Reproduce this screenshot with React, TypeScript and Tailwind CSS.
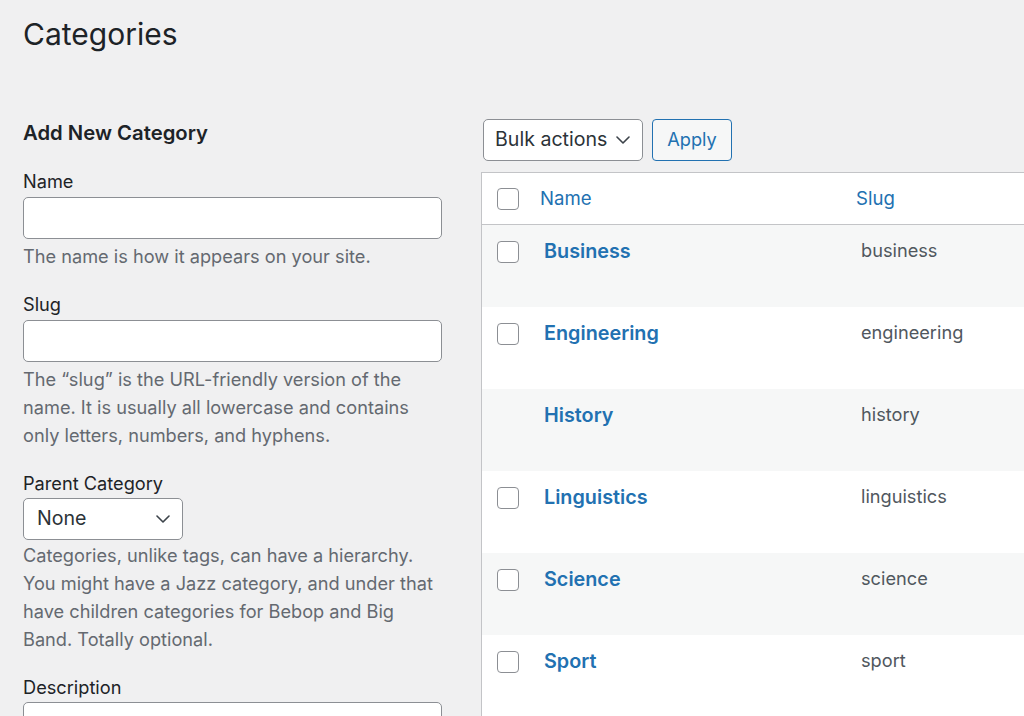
const categories = [
  {name: "Business", slug: "business", checkbox: true},
  {name: "Engineering", slug: "engineering", checkbox: true},
  {name: "History", slug: "history", checkbox: false},
  {name: "Linguistics", slug: "linguistics", checkbox: true},
  {name: "Science", slug: "science", checkbox: true},
  {name: "Sport", slug: "sport", checkbox: true},
]

function Chevron() {
  return (
    <svg width="14" height="8" viewBox="0 0 14 8" fill="none" className="shrink-0">
      <path d="M1 1l6 6 6-6" stroke="#3c434a" strokeWidth="1.6" strokeLinecap="round" strokeLinejoin="round" />
    </svg>
  )
}

function Checkbox() {
  return (
    <span className="block w-[22px] h-[22px] rounded-[4px] border border-[#8c8f94] bg-white shrink-0" />
  )
}

function Field({
  label,
  children,
  help,
  helpGap = "mt-[3px]",
}: {
  label: string
  children: React.ReactNode
  help?: string[]
  helpGap?: string
}) {
  return (
    <div className="mb-[22px]">
      <div className="text-[18.2px] leading-[24px] text-[#1d2327] mb-[4px]">{label}</div>
      {children}
      {help && (
        <p className={`${helpGap} text-[18.2px] leading-[28px] text-[#646970] whitespace-nowrap`}>
          {help.map((line, i) => (
            <span key={i} className="block">
              {line}
            </span>
          ))}
        </p>
      )}
    </div>
  )
}

export default function App() {
  return (
    <div
      className="w-[1024px] h-[716px] overflow-hidden bg-[#f0f0f1] text-[#1d2327]"
      style={{fontFamily: "Inter, 'Liberation Sans', sans-serif"}}
    >
      <div className="pl-[23px] pt-[16px]">
        <h1 className="text-[30px] leading-[37px] font-normal text-[#1d2327]">Categories</h1>
      </div>

      <div className="flex gap-[39px] pl-[23px] mt-[68px]">
        {/* add form */}
        <div className="w-[419px] shrink-0">
          <h2 className="text-[20.3px] leading-[24px] font-semibold mb-[24px]">Add New Category</h2>

          <Field label="Name" help={["The name is how it appears on your site."]}>
            <div className="h-[42px] rounded-[5px] border border-[#8c8f94] bg-white" />
          </Field>

          <Field
            label="Slug"
            help={[
              "The \u201cslug\u201d is the URL-friendly version of the",
              "name. It is usually all lowercase and contains",
              "only letters, numbers, and hyphens.",
            ]}
          >
            <div className="h-[42px] rounded-[5px] border border-[#8c8f94] bg-white" />
          </Field>

          <Field
            label="Parent Category"
            helpGap="mt-[1px]"
            help={[
              "Categories, unlike tags, can have a hierarchy.",
              "You might have a Jazz category, and under that",
              "have children categories for Bebop and Big",
              "Band. Totally optional.",
            ]}
          >
            <div className="w-[160px] h-[42px] -mt-[1px] rounded-[5px] border border-[#8c8f94] bg-white flex items-center justify-between pl-[13px] pr-[12px]">
              <span className="text-[19.6px] text-[#2c3338]">None</span>
              <Chevron />
            </div>
          </Field>

          <Field label="Description">
            <div className="h-[80px] -mt-[1px] rounded-[5px] border border-[#8c8f94] bg-white" />
          </Field>
        </div>

        {/* list table */}
        <div className="w-[620px] shrink-0 -mt-[2px]">
          <div className="flex gap-[9px] ml-[2px]">
            <div className="w-[160px] h-[42px] rounded-[5px] border border-[#8c8f94] bg-white flex items-center justify-between pl-[11px] pr-[12px]">
              <span className="text-[19.6px] text-[#2c3338]">Bulk actions</span>
              <Chevron />
            </div>
            <button className="w-[80px] h-[42px] rounded-[4px] border border-[#2271b1] bg-[#f6f7f7] text-[18.2px] text-[#2271b1]">
              Apply
            </button>
          </div>

          <div className="mt-[11px] border border-[#c3c4c7] bg-white">
            <div className="h-[52px] flex items-center border-b border-[#c3c4c7] pl-[15px]">
              <Checkbox />
              <span className="ml-[21px] w-[316px] text-[18.6px] text-[#2271b1]">Name</span>
              <span className="text-[18.6px] text-[#2271b1]">Slug</span>
            </div>
            {categories.map((c, i) => (
              <div
                key={c.name}
                className={`h-[82px] flex items-start pl-[15px] ${i % 2 === 0 ? "bg-[#f6f7f7]" : "bg-white"}`}
              >
                <div className="w-[22px] mt-[16px] shrink-0">{c.checkbox && <Checkbox />}</div>
                <span className="mt-[14px] ml-[25px] w-[317px] text-[19.8px] leading-[24px] font-semibold text-[#2271b1]">
                  {c.name}
                </span>
                <span className="mt-[13px] text-[18.2px] leading-[24px] text-[#50575e]">{c.slug}</span>
              </div>
            ))}
          </div>
        </div>
      </div>
    </div>
  )
}
